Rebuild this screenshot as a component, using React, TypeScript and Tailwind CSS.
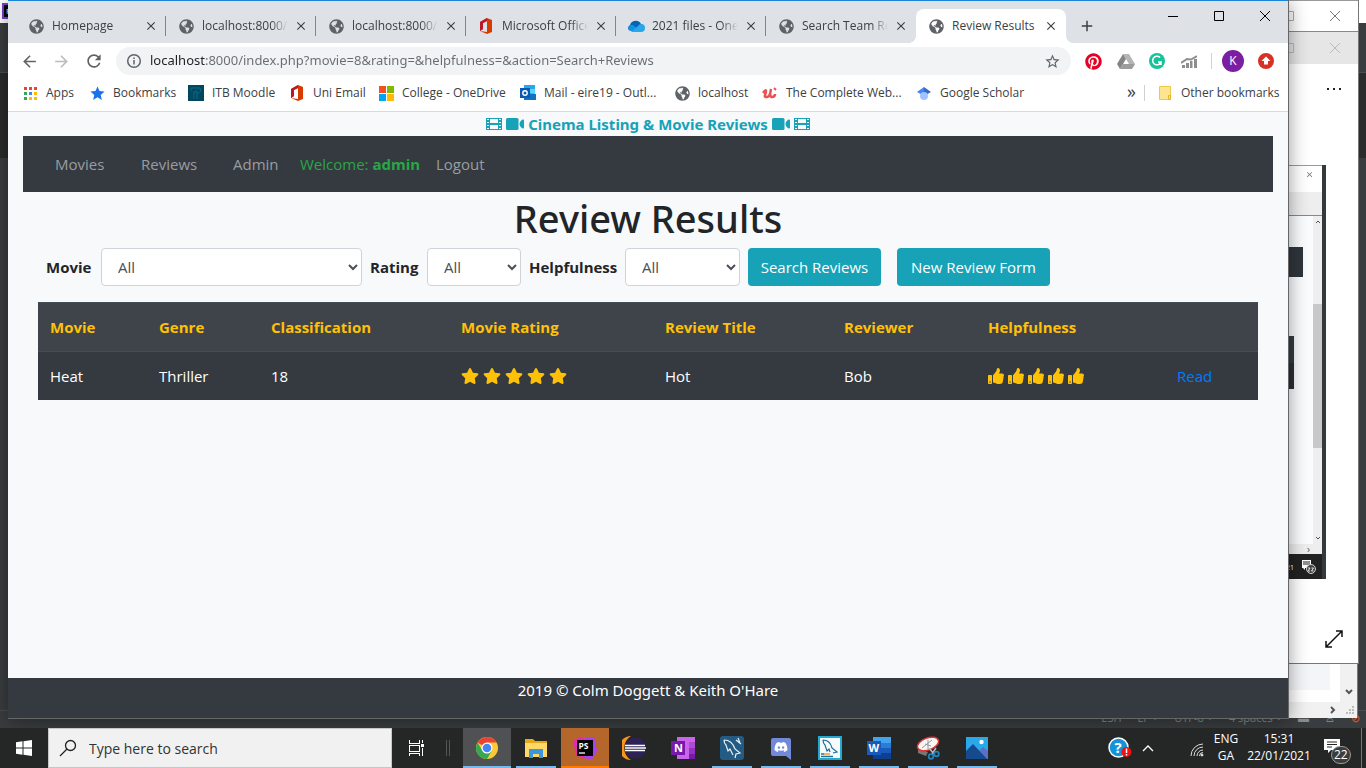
import type { ReactNode } from "react";
import { MdClose, MdArrowBack, MdArrowForward, MdRefresh, MdStarBorder, MdAdd, MdStar } from "react-icons/md";
import { FaStar, FaThumbsUp, FaPinterest, FaDiscord, FaGlobeAmericas } from "react-icons/fa";

function Office() {
  return (
    <svg viewBox="0 0 16 16" className="size-4">
      <path d="M2 4 9 0l5 2v12l-5 2-7-3 7 1V3L5 5v6l-3 2Z" fill="#d83b01" />
      <path d="M2 4 9 0v3L5 5v6l-3 2Z" fill="#b5192b" />
    </svg>
  );
}

function Cloud() {
  return (
    <svg viewBox="0 0 18 12" className="h-3 w-[18px] shrink-0">
      <path d="M3 5a6 6 0 0 1 11-1 4 4 0 0 1 3.500 4L9 11 1 9a4 4 0 0 1 2-4Z" fill="#0364b8" />
      <path d="M1 9a4 4 0 0 1 5-4l8 6H4a4 4 0 0 1-3-2Z" fill="#1490df" />
      <path d="m5 11 6-5a4 4 0 0 1 3-2 4 4 0 0 1 0 8H4Z" fill="#28a8ea" />
    </svg>
  );
}

function Film() {
  return (
    <svg viewBox="0 0 16 12" className="inline h-3 w-4 shrink-0" shapeRendering="crispEdges">
      <path fill="#17a2b8" fillRule="evenodd" d="M0 0h16v12H0ZM1 1v1h2V1ZM1 4v1h2V4ZM1 7v1h2V7ZM1 10v1h2v-1ZM13 1v1h2V1ZM13 4v1h2V4ZM13 7v1h2V7ZM13 10v1h2v-1ZM4 1v4h8V1ZM4 7v4h8V7Z" />
    </svg>
  );
}

function Video() {
  return (
    <svg viewBox="0 0 18 12" className="inline h-3 w-[18px] shrink-0">
      <rect width="12.500" height="12" rx="1.500" fill="#17a2b8" />
      <path d="M13.500 6c0-2 2-4.500 3.500-4.500q1 0 1 1v7q0 1-1 1c-1.500 0-3.500-2.500-3.500-4.500Z" fill="#17a2b8" />
    </svg>
  );
}

type Tab = { title: string; icon: "globe" | "office" | "cloud"; active?: boolean };
const tabs: Tab[] = [
  { title: "Homepage", icon: "globe" },
  { title: "localhost:8000/in", icon: "globe" },
  { title: "localhost:8000/in", icon: "globe" },
  { title: "Microsoft Office", icon: "office" },
  { title: "2021 files - OneD", icon: "cloud" },
  { title: "Search Team Res", icon: "globe" },
  { title: "Review Results", icon: "globe", active: true },
];

function TabStrip() {
  return (
    <div className="relative flex h-[43px] shrink-0 items-end border-t border-[#1883d7] bg-[#dee1e6] pl-2">
      {tabs.map((t, i) => (
        <div
          key={i}
          className={
            t.active
              ? "relative flex h-[34px] w-[150px] items-center rounded-t-lg bg-white pl-3 before:absolute before:bottom-0 before:-left-2 before:size-2 before:bg-[radial-gradient(circle_at_0_0,transparent_8px,white_8px)] after:absolute after:-right-2 after:bottom-0 after:size-2 after:bg-[radial-gradient(circle_at_100%_0,transparent_8px,white_8px)]"
              : "flex h-[34px] w-[150px] items-center pl-3"
          }
        >
          <span className="flex w-4 shrink-0 justify-center text-[#5f6368]">
            {t.icon === "globe" && <FaGlobeAmericas size={15} />}
            {t.icon === "office" && <Office />}
            {t.icon === "cloud" && <Cloud />}
          </span>
          <span
            className={
              t.active
                ? "ml-2 w-[86px] text-[12px] whitespace-nowrap text-[#3c4043]"
                : "ml-2 w-[86px] overflow-hidden [mask-image:linear-gradient(to_right,#000_80%,transparent)] text-[12px] whitespace-nowrap text-[#3c4043]"
            }
          >
            {t.title}
          </span>
          <button aria-label={`Close ${t.title}`} className="ml-1.5 text-[#3c4043]">
            <MdClose size={14} />
          </button>
          {!t.active && i < 5 && <span className="ml-auto h-5 w-px bg-[#80868b]" />}
        </div>
      ))}
      <button aria-label="New tab" className="mb-2 ml-3 text-[#3c4043]">
        <MdAdd size={18} />
      </button>
      <div className="ml-auto flex h-[30px] items-center self-start text-black">
        <button aria-label="Minimise" className="flex w-[46px] justify-center">
          <svg viewBox="0 0 10 10" className="size-2.5" stroke="currentColor"><path d="M0 5.500h10" /></svg>
        </button>
        <button aria-label="Maximise" className="flex w-[46px] justify-center">
          <svg viewBox="0 0 10 10" className="size-2.5" stroke="currentColor" fill="none"><path d="M.5.5h9v9h-9Z" /></svg>
        </button>
        <button aria-label="Close" className="flex w-[46px] justify-center">
          <svg viewBox="0 0 10 10" className="size-2.5" stroke="currentColor"><path d="m0 0 10 10M10 0 0 10" /></svg>
        </button>
      </div>
    </div>
  );
}

function Toolbar() {
  return (
    <div className="flex h-9 shrink-0 items-center bg-white pl-3 text-[#5f6368]">
      <button aria-label="Back" className="w-8"><MdArrowBack size={19} /></button>
      <button aria-label="Forward" className="w-8 text-[#babcbe]"><MdArrowForward size={19} /></button>
      <button aria-label="Reload" className="w-8"><MdRefresh size={20} /></button>
      <div className="flex h-7 flex-1 items-center rounded-full bg-[#f1f3f4] pr-2.5 pl-2.5">
        <svg viewBox="0 0 16 16" className="size-4 shrink-0" fill="none" stroke="#5f6368" strokeWidth="1.5">
          <circle cx="8" cy="8" r="6.300" />
          <path d="M8 7v4.500M8 4.500V6" />
        </svg>
        <input
          aria-label="Address"
          defaultValue="localhost:8000/index.php?movie=8&rating=&helpfulness=&action=Search+Reviews"
          className="ml-2 flex-1 bg-[linear-gradient(to_right,#202124_56px,#686b70_56px)] bg-clip-text font-['Noto_Sans',sans-serif] text-[13px] text-transparent outline-none"
        />
        <button aria-label="Bookmark this page"><MdStarBorder size={17} /></button>
      </div>
      <div className="flex items-center pr-3.5 pl-3.5">
        <span className="w-8"><FaPinterest size={17} color="#e60023" /></span>
        <svg viewBox="0 0 18 16" className="mr-3.5 h-4 w-[18px]">
          <path d="M6 1h6l6 10h-6Z" fill="#b5b5b5" />
          <path d="m6 1 3 5-6 10-3-5Z" fill="#858585" />
          <path d="M6 11h12l-3 5H3Z" fill="#9c9c9c" />
          <path d="m9 7 2 4H7Z" fill="#fff" />
        </svg>
        <svg viewBox="0 0 16 16" className="mr-4 size-4">
          <circle cx="8" cy="8" r="8" fill="#15c39a" />
          <path d="M11 4.500A4.300 4.300 0 1 0 12 9H9m3 0v3" fill="none" stroke="#fff" strokeWidth="1.500" />
        </svg>
        <svg viewBox="0 0 16 13" className="h-[13px] w-4" fill="#8e8e8e">
          <path d="M1 10h3v3H1ZM5 8h3v5H5ZM9 6h2.500v7H9ZM13 4h3v9h-3Z" />
          <path d="m0 8 6-4 4 .5L16 1" fill="none" stroke="#8e8e8e" strokeWidth="2" />
        </svg>
        <span className="mx-3.5 h-4 w-px bg-[#d0d2d5]" />
        <button className="-ml-1 size-[22px] rounded-full bg-[#7b1fa2] text-[12px] text-white">K</button>
        <svg viewBox="0 0 16 16" className="ml-3.5 size-4">
          <circle cx="8" cy="8" r="8" fill="#d93025" />
          <path d="m8 3.500 4.500 4.500H10v3.500H6V8H3.500Z" fill="#fff" />
        </svg>
      </div>
    </div>
  );
}

function Bookmark({ icon, label, className }: { icon: ReactNode; label: string; className: string }) {
  return (
    <a href="#" className={`flex shrink-0 items-center whitespace-nowrap ${className}`}>
      <span className="flex w-4 shrink-0 justify-center text-[#5f6368]">{icon}</span>
      <span className="ml-2">{label}</span>
    </a>
  );
}

const appDots = ["#ea4335", "#ea4335", "#ea4335", "#34a853", "#4285f4", "#fbbc04", "#34a853", "#fbbc04", "#fbbc04"];

function BookmarksBar() {
  return (
    <div className="flex h-[33px] shrink-0 items-center border-b border-[#d8dadd] bg-white pr-3.5 pb-1 pl-3.5 text-[12px] text-[#3c4043]">
      <Bookmark
        className="w-[67px]"
        label="Apps"
        icon={
          <svg viewBox="0 0 13 13" className="size-[13px]">
            {appDots.map((c, i) => (
              <rect key={i} x={(i % 3) * 5} y={Math.floor(i / 3) * 5} width="3" height="3" fill={c} />
            ))}
          </svg>
        }
      />
      <Bookmark className="w-[99px]" label="Bookmarks" icon={<MdStar size={17} color="#1a73e8" className="shrink-0" />} />
      <Bookmark
        className="w-[101px]"
        label="ITB Moodle"
        icon={
          <svg viewBox="0 0 16 16" className="size-4">
            <path d="M0 0h16v16H0Z" fill="#00475f" />
            <path d="M3 6V3h9q2 4-2 5H8V5M6 6v8M9 8v6" fill="none" stroke="#0f6a85" />
          </svg>
        }
      />
      <Bookmark className="w-[89px]" label="Uni Email" icon={<Office />} />
      <Bookmark
        className="w-[142px]"
        label="College - OneDrive"
        icon={
          <svg viewBox="0 0 15 15" className="size-[15px]">
            <path d="M0 0h7v7H0Z" fill="#f25022" />
            <path d="M8 0h7v7H8Z" fill="#7fba00" />
            <path d="M0 8h7v7H0Z" fill="#00a4ef" />
            <path d="M8 8h7v7H8Z" fill="#ffb900" />
          </svg>
        }
      />
      <Bookmark
        className="w-[154px]"
        label="Mail - eire19 - Outl..."
        icon={
          <svg viewBox="0 0 16 16" className="size-4">
            <path d="M4 0h11v9H4Z" fill="#28a8ea" />
            <path d="M10 4h5v5h-5Z" fill="#50d9ff" />
            <path d="m4 8 12 1v6H4Z" fill="#1272c4" />
            <path d="M0 3h10v10H0Z" fill="#0a5bb0" />
            <circle cx="5" cy="8" r="2.200" fill="none" stroke="#fff" strokeWidth="1.400" />
          </svg>
        }
      />
      <Bookmark className="w-[88px]" label="localhost" icon={<FaGlobeAmericas size={15} />} />
      <Bookmark
        className="w-[154px]"
        label="The Complete Web..."
        icon={
          <svg viewBox="0 0 16 16" className="size-4" fill="none" stroke="#ec5252" strokeWidth="2.500">
            <path d="M1 8q3-4 3-2T3 10t2 2q3 0 4-8M9 4q-2 8 1 8t3-3" />
            <path d="m12 3 2 2" strokeWidth="2" />
          </svg>
        }
      />
      <Bookmark
        className="w-[107px]"
        label="Google Scholar"
        icon={
          <svg viewBox="0 0 16 16" className="size-4">
            <path d="M8 2 1 7l7 4Z" fill="#4285f4" />
            <path d="m8 2 7 5-7 4Z" fill="#356ac3" />
            <circle cx="8" cy="11" r="4" fill="#a0c3ff" />
          </svg>
        }
      />
      <button aria-label="More bookmarks" className="ml-auto pb-1 text-[18px] leading-4">»</button>
      <span className="mr-3 ml-2 h-4 w-px shrink-0 bg-[#d0d2d5]" />
      <Bookmark
        className="w-[117px]"
        label="Other bookmarks"
        icon={
          <svg viewBox="0 0 12 14" className="h-3.5 w-3">
            <path d="M.5.5h11v13H.5Z" fill="#fee391" stroke="#f0c848" />
            <path d="M9.500 9.500h2v4h-2Z" fill="#fee391" stroke="#e5b52e" />
          </svg>
        }
      />
    </div>
  );
}

const field = "h-[38px] rounded border border-[#ced4da] bg-white px-3 text-[15px] text-[#495057]";
const action = "h-[38px] rounded bg-[#17a2b8] text-center text-[15px] whitespace-nowrap text-white";

function ReviewPage() {
  return (
    <div className="flex min-h-0 flex-1 flex-col bg-[#f8f9fa] text-[15px] leading-6 text-[#212529]">
      <main className="flex-1 px-[15px]">
        <div className="flex h-6 items-center justify-center gap-1 font-['Noto_Sans',sans-serif] font-bold whitespace-nowrap text-[#17a2b8]">
          <Film />
          <Video />
          <span>Cinema Listing &amp; Movie Reviews</span>
          <Video />
          <Film />
        </div>
        <nav className="flex h-14 items-center bg-[#343a40] pl-8 text-[#9a9da0]">
          <a href="#" className="w-[86px]">Movies</a>
          <a href="#" className="w-[92px]">Reviews</a>
          <a href="#" className="w-[67px]">Admin</a>
          <span className="w-[136px] whitespace-nowrap text-[#28a745]">Welcome: <b>admin</b></span>
          <a href="#">Logout</a>
        </nav>
        <h1 className="h-14 text-center font-['Noto_Sans',sans-serif] text-[38px] leading-[52px] font-medium">Review Results</h1>
        <form className="flex items-center pl-[23px]" onSubmit={(e) => e.preventDefault()}>
          <label htmlFor="movie" className="w-[55px] shrink-0 font-bold">Movie</label>
          <select id="movie" className={`w-[261px] ${field}`}><option>All</option></select>
          <label htmlFor="rating" className="ml-2 w-[57px] shrink-0 font-bold">Rating</label>
          <select id="rating" className={`w-[94px] ${field}`}><option>All</option></select>
          <label htmlFor="helpfulness" className="ml-2 w-24 shrink-0 font-bold">Helpfulness</label>
          <select id="helpfulness" className={`w-[115px] ${field}`}><option>All</option></select>
          <button type="submit" className={`ml-2 w-[133px] ${action}`}>Search Reviews</button>
          <button type="button" className={`ml-4 w-[153px] ${action}`}>New Review Form</button>
        </form>
        <div className="px-[15px] pt-4">
          <table className="w-full table-fixed bg-[#343a40] text-left text-white">
            <thead className="bg-[#3e444a] text-[#ffc107]">
              <tr className="h-[49px] border-y border-[#454d55]">
                <th className="w-[109px] pl-3">Movie</th>
                <th className="w-28 pl-3">Genre</th>
                <th className="w-[190px] pl-3">Classification</th>
                <th className="w-[204px] pl-3">Movie Rating</th>
                <th className="w-[179px] pl-3">Review Title</th>
                <th className="w-36 pl-3">Reviewer</th>
                <th className="w-[189px] pl-3">Helpfulness</th>
                <th aria-label="Actions" />
              </tr>
            </thead>
            <tbody>
              <tr className="h-12">
                <td className="pl-3">Heat</td>
                <td className="pl-3">Thriller</td>
                <td className="pl-3">18</td>
                <td className="pl-3">
                  <div className="flex gap-1 text-[#ffc107]">
                    {[1, 2, 3, 4, 5].map((n) => <FaStar key={n} size={18} />)}
                  </div>
                </td>
                <td className="pl-3">Hot</td>
                <td className="pl-3">Bob</td>
                <td className="pl-3">
                  <div className="flex gap-1 text-[#ffc107]">
                    {[1, 2, 3, 4, 5].map((n) => <FaThumbsUp key={n} size={16} />)}
                  </div>
                </td>
                <td className="pl-3"><a href="#" className="text-[#007bff]">Read</a></td>
              </tr>
            </tbody>
          </table>
        </div>
      </main>
      <footer className="h-10 shrink-0 bg-[#343a40] text-center font-['Noto_Sans',sans-serif] text-white">2019 © Colm Doggett &amp; Keith O'Hare</footer>
    </div>
  );
}

function ScreenshotPreview() {
  return (
    <div className="absolute top-[165px] right-10 flex h-[414px] w-[60px] bg-[#34393b]">
      <div className="flex w-14 flex-col">
        <div className="flex h-[27px] items-start justify-end border-t border-[#999] bg-white pt-1 pr-2 text-[#777]"><MdClose size={9} /></div>
        <div className="h-6 border-b border-[#888] bg-[#eee]" />
        <div className="flex h-[328px]">
          <div className="flex-1 bg-[#fbfcfd]">
            <div className="mt-[31px] h-[30px] w-[37px] bg-[#2f363b]" />
            <div className="mt-[59px] h-[27px] w-7 bg-[#343b41]" />
            <div className="h-[26px] w-7 bg-[#2b3037]" />
          </div>
          <div className="flex w-[9px] flex-col items-center bg-[#eee] text-[#555]">
            <svg viewBox="0 0 6 4" className="mt-1 h-1 w-1.5" fill="none" stroke="currentColor"><path d="m1 3 2-2 2 2" /></svg>
            <div className="mt-20 h-36 w-full bg-[#c8c8c8]" />
            <svg viewBox="0 0 6 4" className="mt-auto mb-1 h-1 w-1.5" fill="none" stroke="currentColor"><path d="m1 1 2 2 2-2" /></svg>
          </div>
        </div>
        <div className="flex h-2.5 items-center justify-end bg-[#eee] pr-3 text-[10px] leading-none text-[#555]">›</div>
        <div className="flex-1 bg-[#222] pt-1.5 pl-5 text-[7px] leading-none whitespace-nowrap text-white">
          <span className="flex items-center gap-1">
            21
            <svg viewBox="0 0 16 14" className="ml-1 h-3.5 w-4">
              <path d="M0 0h9v8H3v2L1 8H0Z" fill="#fff" />
              <path d="M1 2h7M1 4h7" stroke="#222" />
              <circle cx="9" cy="9" r="4.500" fill="#444" stroke="#ccc" />
              <path d="M6 8h2l-2 3h2M9.500 8h2l-2 3h2" fill="none" stroke="#fff" strokeWidth=".8" />
            </svg>
          </span>
        </div>
      </div>
    </div>
  );
}

function BackgroundWindows() {
  return (
    <>
      <div className="absolute top-0 left-0 flex h-full w-full flex-col bg-[#3a3d3f]">
        <div className="h-[23px] bg-white pt-[3px] pl-0.5">
          <div className="size-4 border-2 border-[#7c3fd6] bg-black pl-0.5 text-[8px] leading-3 text-white">P</div>
        </div>
        <div className="h-[50px] border-b border-[#4b4e50]" />
        <div className="h-[85px] bg-[#2b2b2b]" />
        <div className="mt-auto flex h-[18px] items-center justify-end gap-4 border-t border-[#4a4d4f] pr-1.5 pb-1 text-[11px] leading-none text-[#8a8d8f]">
          <span>ESH</span>
          <span>LF ÷</span>
          <span>UTF-8 ÷</span>
          <span>4 spaces ÷</span>
          <span>▬</span>
          <span>♙</span>
          <span className="text-[#e05a25]">⊘</span>
        </div>
      </div>
      <div className="absolute right-2 bottom-2.5 flex h-[56px] w-40 flex-col border-r border-[#777] bg-[#f1f1f1] text-[#555]">
        <div className="flex flex-1">
          <div className="flex-1 bg-white"><div className="mr-2.5 h-7 bg-[#f4f5f8]" /></div>
          <div className="flex w-[17px] items-center justify-center">
            <svg viewBox="0 0 8 6" className="mt-5 h-1.5 w-2" fill="none" stroke="currentColor" strokeWidth="2"><path d="m1 1 3 3 3-3" /></svg>
          </div>
        </div>
        <div className="flex h-4 items-center justify-end gap-2.5 pr-0.5">
          <svg viewBox="0 0 6 8" className="h-2 w-1.5" fill="none" stroke="currentColor" strokeWidth="2"><path d="m1 1 3 3-3 3" /></svg>
          <svg viewBox="0 0 9 9" className="size-[9px]" fill="#bbb"><path d="M6 0h2v2H6ZM3 3h2v2H3ZM6 3h2v2H6ZM0 6h2v2H0ZM3 6h2v2H3ZM6 6h2v2H6Z" /></svg>
        </div>
      </div>
      <div className="absolute top-0 right-[7px] bottom-16 w-40 border-r border-b border-[#777] bg-white text-[#aaa]">
        <div className="flex h-8 items-center justify-end gap-9 border-t border-b border-t-[#999] border-b-[#888] pr-[18px]">
          <svg viewBox="0 0 10 10" className="size-2.5" stroke="currentColor" fill="none"><path d="M.5.5h9v9h-9Z" /></svg>
          <svg viewBox="0 0 10 10" className="size-2.5" stroke="#777"><path d="m0 0 10 10M10 0 0 10" /></svg>
        </div>
        <div className="flex h-8 items-center justify-end gap-9 bg-[#e6e6e6] pr-[18px]">
          <svg viewBox="0 0 10 10" className="size-2.5" stroke="#bbb" fill="none"><path d="M.5.5h9v9h-9Z" /></svg>
          <svg viewBox="0 0 10 10" className="size-2.5" stroke="#bbb"><path d="m0 0 10 10M10 0 0 10" /></svg>
        </div>
        <div className="flex justify-end pt-6 pr-4">
          <svg viewBox="0 0 16 2" className="h-0.5 w-4" fill="#222"><path d="M1 0h2v2H1ZM7 0h2v2H7ZM13 0h2v2h-2Z" /></svg>
        </div>
        <svg viewBox="0 0 20 20" className="absolute right-3.5 bottom-3.5 size-5" fill="none" stroke="#111" strokeWidth="1.500">
          <path d="M2 18 18 2M12 2h6v6M2 12v6h6" />
        </svg>
      </div>
      <ScreenshotPreview />
    </>
  );
}

const apps: { name: string; tile: string; line: string; icon: ReactNode }[] = [
  {
    name: "Chrome", tile: "bg-[#4f5152]", line: "w-12 bg-[#76b9ed]",
    icon: (
      <svg viewBox="0 0 24 24" className="size-6">
        <circle cx="12" cy="12" r="11" fill="#fbc936" />
        <path d="M12 12 2.500 6.500A11 11 0 0 1 21.500 6.500H12Z" fill="#ea4335" />
        <path d="M2.500 6.500A11 11 0 0 0 12 23l5-8.500L12 12l-5 2Z" fill="#34a853" />
        <circle cx="12" cy="12" r="5.500" fill="#fff" />
        <circle cx="12" cy="12" r="4.300" fill="#4285f4" />
      </svg>
    ),
  },
  {
    name: "File Explorer", tile: "", line: "w-10 bg-[#76b9ed]",
    icon: (
      <svg viewBox="0 0 24 24" className="size-6">
        <path d="M1 3h8l2 2h12v16H1Z" fill="#e8a816" />
        <path d="M1 7h22v14H1Z" fill="#ffd867" />
        <path d="M5 13h14v9h-4v-4H9v4H5Z" fill="#3b96db" />
      </svg>
    ),
  },
  {
    name: "PhpStorm", tile: "bg-[#b5662b]", line: "w-12 bg-[#ff7b00]",
    icon: (
      <svg viewBox="0 0 24 24" className="size-6">
        <path d="m0 5 7-4 8 2 6-2 3 14-5 8-10-1-6-3Z" fill="#e52dac" />
        <path d="m12 2 9-1 3 14-5 8-8-1Z" fill="#a244f5" />
        <path d="M4 4h16v16H4Z" fill="#050505" />
        <text x="5.500" y="12.500" fontSize="8.500" fontWeight="700" fill="#fff">PS</text>
        <path d="M6 17h6" stroke="#fff" strokeWidth="1.300" />
      </svg>
    ),
  },
  {
    name: "Eclipse", tile: "", line: "",
    icon: (
      <svg viewBox="0 0 24 24" className="size-6">
        <path d="M9 0a12 12 0 0 0 0 24 14 14 0 0 1 0-24Z" fill="#f7941e" />
        <circle cx="13.500" cy="12" r="10.500" fill="#2c2255" />
        <path d="M3 9.500h20M3 12h21M3 14.500h20" stroke="#fff" strokeWidth="1.400" />
      </svg>
    ),
  },
  {
    name: "OneNote", tile: "", line: "",
    icon: (
      <svg viewBox="0 0 24 24" className="size-6">
        <path d="M6 1h18v22H6Z" fill="#ca64ea" />
        <path d="M18 6h6v6h-6Z" fill="#ae4bd5" />
        <path d="M18 12h6v6h-6Z" fill="#9332bf" />
        <path d="M18 18h6v5h-6Z" fill="#7719aa" />
        <path d="M0 5h14v14H0Z" fill="#7719aa" />
        <text x="3" y="16" fontSize="11" fontWeight="700" fill="#fff">N</text>
      </svg>
    ),
  },
  {
    name: "MySQL Workbench", tile: "", line: "w-10 bg-[#76b9ed]",
    icon: (
      <svg viewBox="0 0 24 24" className="size-6">
        <rect width="24" height="24" rx="3" fill="#245b84" />
        <path d="M4 4q8 0 11 9l5 4-4 1-1 4M4 4q0 3 2 5l2 6 2-2 3 6M16 4l5 4M18 2l2 5" fill="none" stroke="#e8f1f6" strokeWidth="1.200" />
      </svg>
    ),
  },
  {
    name: "Discord", tile: "", line: "w-10 bg-[#76b9ed]",
    icon: (
      <svg viewBox="0 0 24 24" className="size-6">
        <path d="M4 2h16q2 0 2 2v20l-5-4H4q-2 0-2-2V4q0-2 2-2Z" fill="#7289da" />
        <g transform="translate(5 4)"><FaDiscord size={14} color="#fff" /></g>
      </svg>
    ),
  },
  {
    name: "MySQL Installer", tile: "", line: "w-10 bg-[#76b9ed]",
    icon: (
      <svg viewBox="0 0 24 24" className="size-6">
        <rect x="1" y="1" width="22" height="22" fill="#f5fbfd" stroke="#25a9cf" strokeWidth="2" />
        <path d="M5 4q7 0 9 8l5 4-4 1M5 4q0 3 2 5l2 6 2-2 1 3" fill="none" stroke="#1a6d99" strokeWidth="1.200" />
        <path d="M3 18h3M3 20.500h12" stroke="#18759c" strokeWidth="1.500" />
        <path d="M6 18h6" stroke="#f39a2b" strokeWidth="1.500" />
      </svg>
    ),
  },
  {
    name: "Word", tile: "", line: "w-10 bg-[#76b9ed]",
    icon: (
      <svg viewBox="0 0 24 24" className="size-6">
        <path d="M6 1h18v6H6Z" fill="#41a5ee" />
        <path d="M6 7h18v5H6Z" fill="#2b7cd3" />
        <path d="M6 12h18v5H6Z" fill="#185abd" />
        <path d="M6 17h18v6H6Z" fill="#103f91" />
        <path d="M0 5h14v14H0Z" fill="#185abd" />
        <text x="1.500" y="16" fontSize="11" fontWeight="700" fill="#fff">W</text>
      </svg>
    ),
  },
  {
    name: "Snipping Tool", tile: "", line: "w-10 bg-[#76b9ed]",
    icon: (
      <svg viewBox="0 0 24 24" className="size-6">
        <path d="M2 13v4l8 3 2-4Z" fill="#777" />
        <ellipse cx="12" cy="8" rx="11" ry="6" transform="rotate(-20 12 8)" fill="#f6f6f6" stroke="#d33" strokeWidth="1.500" />
        <path d="m6 12 10-8M12 4v9M9 8l6 2" stroke="#999" />
        <path d="m13 12 5 6M20 12l-4 6" stroke="#bbb" strokeWidth="1.500" />
        <circle cx="15" cy="20.500" r="2.300" fill="none" stroke="#2781b8" strokeWidth="1.800" />
        <circle cx="20.500" cy="18" r="2.300" fill="none" stroke="#2781b8" strokeWidth="1.800" />
      </svg>
    ),
  },
  {
    name: "Photos", tile: "", line: "w-10 bg-[#76b9ed]",
    icon: (
      <svg viewBox="0 0 24 24" className="size-6">
        <path d="M1 1h22v22H1Z" fill="#29a9ea" />
        <path d="m12 17 6-6 5 4v8H10Z" fill="#5a6fc8" />
        <path d="m1 15 7-7 14 15H1Z" fill="#164a8c" />
        <circle cx="16.500" cy="6" r="2.200" fill="#fff" />
      </svg>
    ),
  },
];

function Taskbar() {
  return (
    <div className="relative flex h-10 shrink-0 items-center bg-[#252727] text-[12px] text-white">
      <button aria-label="Start" className="flex w-12 shrink-0 justify-center">
        <svg viewBox="0 0 16 16" className="size-4" fill="#fff"><path d="m0 2.300 6.500-1v6.200H0ZM7.500 1.200 16 0v7.500H7.500ZM0 8.500h6.500v6.200l-6.500-1ZM7.500 8.500H16V16l-8.500-1.200Z" /></svg>
      </button>
      <label className="flex h-10 w-[344px] items-center border border-[#c6c6c6] bg-[#f1f1f1] pl-2.5 text-[#222]">
        <svg viewBox="0 0 18 18" className="size-[18px]" fill="none" stroke="currentColor" strokeWidth="1.300"><circle cx="11.500" cy="6.500" r="5" /><path d="m8 10-7 7" /></svg>
        <input aria-label="Search" placeholder="Type here to search" className="ml-3 w-60 text-[14px] outline-none placeholder:text-[#333]" />
      </label>
      <button aria-label="Task view" className="flex w-12 shrink-0 justify-center">
        <svg viewBox="0 0 17 16" className="h-4 w-[17px]" fill="none" stroke="#fff" shapeRendering="crispEdges">
          <path d="M1 0v3h10V0M1 16v-3h10v3M1 5h10v6H1ZM14.500 0v3M14.500 8v8" />
          <path d="M13 4h3v3h-3Z" fill="#fff" stroke="none" />
        </svg>
      </button>
      <div className="mx-1.5 h-4 w-1 border-x border-[#555]" />
      <div className="ml-[7px] flex gap-px">
        {apps.map((a) => (
          <button key={a.name} aria-label={a.name} className={`flex h-10 w-12 flex-col items-center ${a.tile}`}>
            <span className="flex flex-1 items-center">{a.icon}</span>
            <span className={`-mt-0.5 h-0.5 ${a.line}`} />
          </button>
        ))}
      </div>
      <div className="ml-auto flex h-full items-center text-center leading-4">
        <svg viewBox="0 0 24 22" className="h-[22px] w-6">
          <circle cx="10.500" cy="10.500" r="9.500" fill="#1693d8" stroke="#fff" strokeWidth="1.500" />
          <text x="6.500" y="16" fontSize="15" fontWeight="700" fill="#fff">?</text>
          <circle cx="18.500" cy="15" r="5" fill="#e11" />
          <path d="M18.500 11.500V16M18.500 17v1.500" stroke="#fff" strokeWidth="1.500" />
        </svg>
        <button aria-label="Show hidden icons" className="ml-2.5">
          <svg viewBox="0 0 12 8" className="h-2 w-3" fill="none" stroke="#fff" strokeWidth="1.300"><path d="m1 7 5-5 5 5" /></svg>
        </button>
        <svg viewBox="0 0 14 14" className="mt-1 ml-9 size-3.5" fill="none" stroke="#ddd">
          <path d="M1 13A12 12 0 0 1 13 1M4 13a9 9 0 0 1 9-9M7 13a6 6 0 0 1 6-6M9.500 13A3.500 3.500 0 0 1 13 9.500" />
          <circle cx="12" cy="12" r="1" fill="#fff" />
        </svg>
        <span className="ml-1.5 w-8 pb-0.5 leading-[17px]">ENG<br />GA</span>
        <span className="ml-0.5 w-[70px] pb-0.5 leading-[17px]">15:31<br />22/01/2021</span>
        <button aria-label="Notifications" className="relative ml-2.5 h-full w-[30px]">
          <svg viewBox="0 0 16 16" className="mb-1 size-4"><path d="M0 1h16v11H7l-3 3v-3H0Z" fill="#fff" /><path d="M3 4h10M3 6.500h10M3 9h5" stroke="#252727" /></svg>
          <span className="absolute top-[18px] left-[7px] rounded-full border border-[#999] bg-[#3b3d3d] px-0.5 text-[12px] leading-4">22</span>
        </button>
        <span className="ml-[7px] h-full w-[5px] border-l border-[#777]" />
      </div>
    </div>
  );
}

export default function App() {
  return (
    <div className="flex h-screen flex-col overflow-hidden bg-[#3a3d3f] font-['Open_Sans','Noto_Sans',sans-serif]">
      <div className="relative flex-1">
        <BackgroundWindows />
        <div className="absolute top-0 right-[77px] bottom-[9px] left-2 flex flex-col overflow-hidden border-r border-b border-[#666] shadow-[0_2px_18px_rgba(0,0,0,0.4)]">
          <TabStrip />
          <Toolbar />
          <BookmarksBar />
          <ReviewPage />
        </div>
      </div>
      <Taskbar />
    </div>
  );
}
